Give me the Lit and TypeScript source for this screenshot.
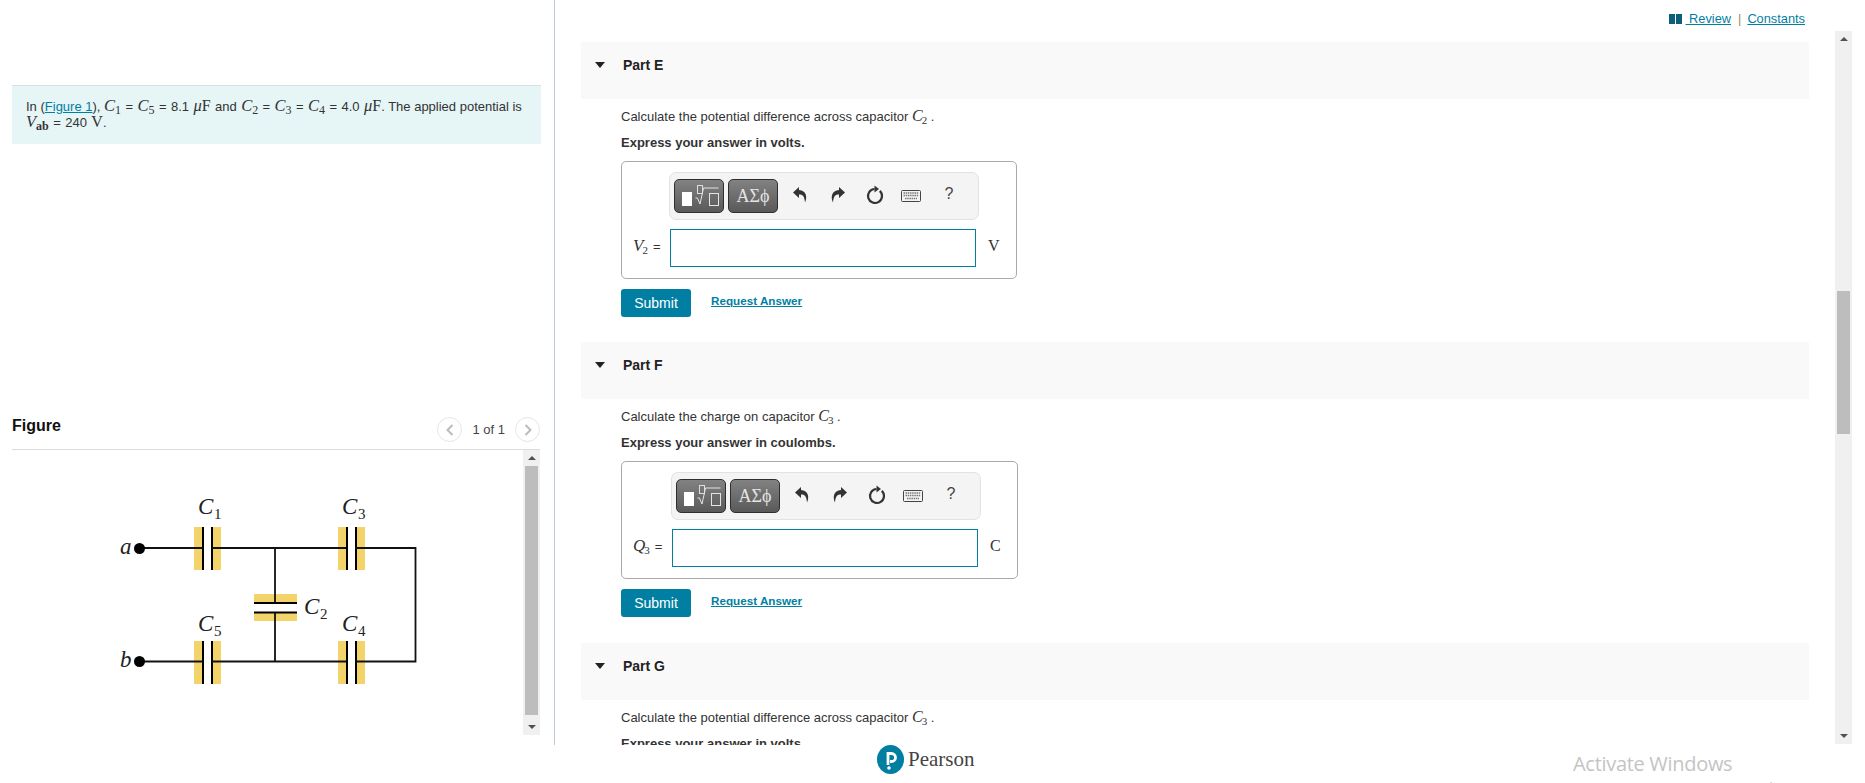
import { LitElement, html, css, svg } from "lit";
import { customElement } from "lit/decorators.js";

interface Part {
  name: string;
  question: string;
  sym: string;
  sub: string;
  hint: string;
  unit: string;
}

const PARTS: Part[] = [
  { name: "Part E", question: "Calculate the potential difference across capacitor", sym: "C", sub: "2", hint: "Express your answer in volts.", unit: "V" },
  { name: "Part F", question: "Calculate the charge on capacitor", sym: "C", sub: "3", hint: "Express your answer in coulombs.", unit: "C" },
  { name: "Part G", question: "Calculate the potential difference across capacitor", sym: "C", sub: "3", hint: "Express your answer in volts.", unit: "V" },
];

const capH = (x: number, y: number) => svg`
  <rect x=${x} y=${y} width="27" height="43" fill="#f3d46b"/>
  <rect x=${x + 8} y=${y} width="9" height="43" fill="#fff"/>
  <rect x=${x + 8} y=${y} width="2" height="43" fill="#000"/>
  <rect x=${x + 17} y=${y} width="2" height="43" fill="#000"/>`;

const capLabel = (x: number, y: number, n: string) => svg`
  <text x=${x} y=${y} class="cl">C</text>
  <text x=${x + 16} y=${y + 5} class="cs">${n}</text>`;

@customElement("app-root")
export class AppRoot extends LitElement {
  static styles = css`
    :host {
      display: block;
      position: relative;
      width: 100%;
      height: 783px;
      overflow: hidden;
      background: #fff;
      font-family: "Liberation Sans", Arial, sans-serif;
      font-size: 13px;
      line-height: 16px;
      color: #333;
    }
    a { color: #007fa3; text-decoration: underline; }
    i, .m { font-family: "Liberation Serif", serif; }
    i { font-style: italic; font-size: 16px; line-height: 0; }
    .m { font-size: 16px; line-height: 0; }
    sub { font-family: "Liberation Serif", serif; font-size: 11px; line-height: 0; vertical-align: -3px; margin-left: -1px; }
    sub.b { font-weight: bold; margin-left: 0; }
    .main { display: flex; height: 745px; }
    .left { width: 554px; flex: none; display: flex; flex-direction: column; padding-top: 85px; box-sizing: border-box; }
    .note {
      margin-left: 12px; width: 529px; height: 59px; box-sizing: border-box;
      background: #e6f5f6; border-top: 1px solid #d5e3e6;
      padding: 13px 12px 0 14px; white-space: nowrap;
    }
    .line { height: 16px; display: block; }
    .mth { word-spacing: 0.8px; }
    .mth i { font-size: 16.5px; }
    .mth sub { font-size: 12px; margin-left: 0; }
    .fig-head {
      margin: 270px 14px 0 12px; height: 36px; box-sizing: border-box; border-bottom: 1px solid #dcdcdc;
      display: flex; align-items: center; padding-bottom: 4px;
    }
    .fig-title { font-size: 16px; font-weight: bold; color: #111; margin-right: auto; position: relative; top: -4px; }
    .nav { width: 25px; height: 25px; box-sizing: border-box; border: 1px solid #e6e6e6; border-radius: 50%; display: flex; align-items: center; justify-content: center; }
    .pager { margin: 0 10px; color: #444; }
    .fig-body { display: flex; align-items: flex-start; height: 286px; margin: 0 14px 0 12px; }
    .fig-body svg.cir { width: 511px; height: 286px; flex: none; display: block; }
    .cl { font: italic 23px "Liberation Serif", serif; fill: #222; }
    .cs { font: 15px "Liberation Serif", serif; fill: #222; }
    .scroll { width: 17px; flex: none; background: #f0f0f0; display: flex; flex-direction: column; align-items: center; }
    .arrow { height: 0; width: 0; border-left: 4px solid transparent; border-right: 4px solid transparent; }
    .arrow.up { border-bottom: 4px solid #505050; }
    .arrow.down { border-top: 4px solid #505050; }
    .thumb { width: 13px; background: #bdbdbd; flex: none; }
    .fs { justify-content: flex-start; padding-top: 6px; box-sizing: border-box; }
    .l-scroll { height: 285px; }
    .l-thumb { height: 249px; margin: 6px 0 auto; }
    .l-scroll .down { margin-bottom: 6px; }
    .divider { width: 1px; flex: none; background: #bccdd9; }
    .right { flex: 1; min-width: 0; display: flex; padding-left: 26px; overflow: hidden; }
    .content { flex: 1; min-width: 0; overflow: hidden; }
    .toplinks { height: 42px; box-sizing: border-box; padding: 11px 4px 0 0; display: flex; justify-content: flex-end; align-items: flex-start; font-size: 12.8px; }
    .toplinks svg { margin: 3px 4px 0 0; }
    .sep { color: #a98a5c; margin: 0 6px 0 7px; }
    .part { height: 300.4px; }
    .phead { height: 57px; background: #f9f9f9; display: flex; padding: 15px 0 0 14px; box-sizing: border-box; font-size: 14px; font-weight: bold; color: #222; }
    .tri { width: 0; height: 0; margin: 5px 18px 0 0; border-left: 5.5px solid transparent; border-right: 5.5px solid transparent; border-top: 6px solid #222; }
    .pbody { margin-left: 40px; padding-top: 10px; }
    .q { margin: 0 0 10px; height: 16px; }
    .hint { margin: 0 0 10px; height: 16px; font-weight: bold; }
    .box {
      width: fit-content; border: 1px solid #aaa; border-radius: 5px; box-sizing: border-box; height: 118px;
      padding: 10px 16px 0 11px; display: grid; grid-template-columns: auto 306px auto; grid-template-rows: 48px 38px; row-gap: 9px; align-items: center;
    }
    .tools {
      grid-column: 2; grid-row: 1; width: 310px; margin-left: -1px; height: 48px; box-sizing: border-box;
      border: 1px solid #e2e2e2; border-radius: 7px; background: #f4f4f4;
      display: flex; align-items: center; padding-left: 4px;
    }
    .tbtn {
      width: 50px; height: 34px; box-sizing: border-box; border: 1px solid #2f2f2f; border-radius: 5px;
      background: linear-gradient(#828282, #595959); margin-right: 4px;
      display: flex; align-items: center; justify-content: center; color: #e4e4e4;
    }
    .tbtn.greek { font: 18px "Liberation Serif", serif; }
    .tbtn svg { display: block; }
    .ico { flex: none; display: flex; justify-content: center; margin-top: -2px; }
    .ico1 { margin-left: 4px; width: 28px; }
    .ico2 { margin-left: 10px; width: 28px; }
    .ico3 { margin-left: 9px; width: 28px; }
    .ico4 { margin-left: 8px; width: 28px; margin-top: 0; }
    .ico5 { margin-left: 10px; width: 28px; font-size: 16px; color: #444; margin-top: -4px; }
    .lbl { grid-column: 1; grid-row: 2; padding: 0 9.500px 3px 0; white-space: nowrap; word-spacing: 1.4px; }
    .lbl i { font-size: 17px; }
    .inp { grid-column: 2; grid-row: 2; height: 38px; box-sizing: border-box; border: 1px solid #007fa3; background: #fff; display: block; width: 100%; padding: 0; outline: none; border-radius: 0; }
    .unit { grid-column: 3; grid-row: 2; margin-left: 12px; padding-bottom: 5px; font: 16px "Liberation Serif", serif; color: #333; }
    .actions { display: flex; margin-top: 10px; align-items: flex-start; }
    .submit { width: 70px; height: 28px; border: 0; border-radius: 3px; background: #007fa3; color: #fff; font: 14px "Liberation Sans", Arial, sans-serif; padding: 0; }
    .req { margin: 4px 0 0 20px; font-size: 11.7px; font-weight: bold; }
    .r-scroll { height: 713px; margin-top: 31px; margin-right: 13px; margin-left: 26px; }
    .r-scroll .sp { height: 250px; flex: none; }
    .r-scroll .thumb { height: 143px; margin-bottom: auto; }
    .r-scroll .down { margin-bottom: 6px; }
    .footer { height: 38px; box-sizing: border-box; padding: 0 0 10px 877px; display: flex; align-items: center; gap: 4px; }
    .pearson { font: 21px "Liberation Serif", serif; color: #444; }
    .activate { position: absolute; left: 1573px; top: 750px; color: #c4c4c4; font: 20px/28px "Open Sans", sans-serif; letter-spacing: -0.3px; white-space: nowrap; }
    .activate div { font-size: 14px; line-height: 20px; letter-spacing: 0; }
  `;

  private tools() {
    return html`<div class="tools">
      <div class="tbtn">
        <svg width="48" height="32" viewBox="0 0 48 32">
          <rect x="7" y="12" width="10" height="14" fill="#fff"/>
          <rect x="22.500" y="5.500" width="5" height="8" fill="none" stroke="#ddd"/>
          <path d="M20.500 18h2l2.500 6 3.500-16h15" fill="none" stroke="#e4e4e4" stroke-width="1"/>
          <rect x="34.500" y="13.500" width="9" height="12" fill="none" stroke="#e4e4e4"/>
        </svg>
      </div>
      <div class="tbtn greek">ΑΣϕ</div>
      <div class="ico ico1"><svg width="16" height="18" viewBox="0 0 16 18"><path d="M7 1L1 6.500l6 5.500V8.500c3.500 0 5.500 1.500 6 8 2.500-5 1.500-12-6-12.500z" fill="#333"/></svg></div>
      <div class="ico ico2"><svg width="16" height="18" viewBox="0 0 16 18"><path d="M9 1l6 5.500-6 5.500V8.500c-3.500 0-5.500 1.500-6 8-2.500-5-1.500-12 6-12.500z" fill="#333"/></svg></div>
      <div class="ico ico3"><svg width="18" height="20" viewBox="0 0 18 20"><path d="M13.800 5.900A7 7 0 1 1 8.500 4" fill="none" stroke="#333" stroke-width="2.200"/><path d="M8.500 0.500v7l4.500-3.500z" fill="#333"/></svg></div>
      <div class="ico ico4"><svg width="20" height="12" viewBox="0 0 20 12"><rect x="0.500" y="0.500" width="19" height="11" rx="1" fill="#f4f4f4" stroke="#444"/><path d="M2.500 3h15M2.500 5.500h15M4 8.500h12" stroke="#777" stroke-width="1.500" stroke-dasharray="1.500 .7"/></svg></div>
      <div class="ico ico5">?</div>
    </div>`;
  }

  private part(p: Part) {
    const lbl = p.unit === "V"
      ? html`<i>V</i><sub>${p.sub}</sub> =`
      : html`<i>Q</i><sub>${p.sub}</sub> =`;
    return html`<section class="part">
      <div class="phead"><div class="tri"></div>${p.name}</div>
      <div class="pbody">
        <p class="q">${p.question} <i>${p.sym}</i><sub>${p.sub}</sub> .</p>
        <p class="hint">${p.hint}</p>
        <div class="box">
          ${this.tools()}
          <span class="lbl">${lbl}</span>
          <input class="inp" aria-label="answer" />
          <span class="unit">${p.unit}</span>
        </div>
        <div class="actions">
          <button class="submit">Submit</button>
          <a class="req" href="#">Request Answer</a>
        </div>
      </div>
    </section>`;
  }

  render() {
    return html`
      <div class="main">
        <div class="left">
          <div class="note">
            <span class="line">In (<a href="#">Figure 1</a>), <span class="mth"><i>C</i><sub>1</sub> = <i>C</i><sub>5</sub> = 8.1 <i>μ</i><span class="m">F</span> and
            <i>C</i><sub>2</sub> = <i>C</i><sub>3</sub> = <i>C</i><sub>4</sub> = 4.0 <i>μ</i><span class="m">F</span>.</span> The applied potential is</span>
            <span class="line mth"><i>V</i><sub class="b">ab</sub> = 240 <span class="m">V</span>.</span>
          </div>
          <div class="fig-head">
            <span class="fig-title">Figure</span>
            <span class="nav"><svg width="10" height="14" viewBox="0 0 10 14"><path d="M7.500 2L2.500 7l5 5" fill="none" stroke="#bbb" stroke-width="2"/></svg></span>
            <span class="pager">1 of 1</span>
            <span class="nav"><svg width="10" height="14" viewBox="0 0 10 14"><path d="M2.500 2l5 5-5 5" fill="none" stroke="#bbb" stroke-width="2"/></svg></span>
          </div>
          <div class="fig-body">
            <svg class="cir" viewBox="12 450 511 286">
              ${capH(194, 527)} ${capH(338, 527)} ${capH(194, 641)} ${capH(338, 641)}
              <rect x="254" y="594" width="43" height="27" fill="#f3d46b"/>
              <rect x="254" y="603" width="43" height="9" fill="#fff"/>
              <rect x="254" y="602" width="43" height="2" fill="#000"/>
              <rect x="254" y="611.500" width="43" height="2" fill="#000"/>
              <path d="M139 548H203M212 548H346M355 548H415.500V661.500H355M346 661.500H212M203 661.500H139" fill="none" stroke="#111" stroke-width="1.800"/>
              <path d="M275 548V602M275 613V661.500" fill="none" stroke="#111" stroke-width="1.800"/>
              <circle cx="139.500" cy="548.500" r="5.500" fill="#000"/>
              <circle cx="139.500" cy="661.500" r="5.500" fill="#000"/>
              <text x="120" y="554" class="cl">a</text>
              <text x="120" y="667" class="cl">b</text>
              ${capLabel(198, 514, "1")} ${capLabel(342, 514, "3")}
              ${capLabel(304, 614, "2")}
              ${capLabel(198, 631, "5")} ${capLabel(342, 631, "4")}
            </svg>
            <div class="scroll fs l-scroll">
              <div class="arrow up"></div>
              <div class="thumb l-thumb"></div>
              <div class="arrow down"></div>
            </div>
          </div>
        </div>
        <div class="divider"></div>
        <div class="right">
          <div class="content">
            <div class="toplinks">
              <svg width="13" height="10" viewBox="0 0 13 10"><path d="M0 0h6v10H0zM7 0h6v10H7z" fill="#0b5f78"/></svg>
              <a href="#">&nbsp;Review</a><span class="sep">|</span><a href="#">Constants</a>
            </div>
            ${PARTS.map((p) => this.part(p))}
          </div>
          <div class="scroll fs r-scroll">
            <div class="arrow up"></div>
            <div class="sp"></div>
            <div class="thumb"></div>
            <div class="arrow down"></div>
          </div>
        </div>
      </div>
      <div class="footer">
        <svg width="27" height="29" viewBox="0 0 27 29">
          <ellipse cx="13.500" cy="14.500" rx="13.500" ry="14.500" fill="#007fa3"/>
          <path d="M11 20V8.500h3.500a4 4 0 0 1 0 8H13" fill="none" stroke="#fff" stroke-width="2.800"/>
          <circle cx="12" cy="23" r="1.800" fill="#fff"/>
        </svg>
        <span class="pearson">Pearson</span>
      </div>
      <div class="activate">Activate Windows<div>Go to Settings to activate Windows.</div></div>
    `;
  }
}
